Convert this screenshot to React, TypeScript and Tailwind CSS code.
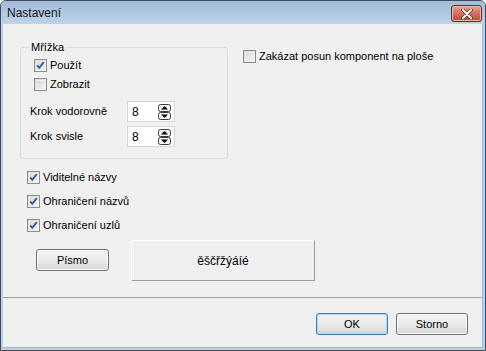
import type { ReactNode } from "react";

function CheckBox({ checked, label }: { checked: boolean; label: string }) {
  return (
    <div className="flex items-center h-[13px] gap-[3px]">
      <span className="relative w-[13px] h-[13px] shrink-0 border border-[#8e8f8f] bg-gradient-to-br from-[#d4d4d4] to-[#f7f7f7]">
        <span className="absolute inset-[1px] border border-[#f4f4f4]/60" />
        {checked && (
          <svg className="absolute inset-0" width="11" height="11" viewBox="0 0 11 11">
            <path d="M2.2 5.4 L4.3 7.8 L8.8 2.2" fill="none" stroke="#3e5ca6" strokeWidth="2" />
          </svg>
        )}
      </span>
      <span className="text-[11px] leading-[13px] text-black whitespace-nowrap">{label}</span>
    </div>
  );
}

function SpinIcon() {
  return (
    <svg width="13" height="16" viewBox="0 0 13 16">
      <rect x="0.5" y="0.5" width="12" height="7" rx="2" fill="#f2f2f2" stroke="#3c3c3c" />
      <path d="M3 5.5 L6.5 2 L10 5.5 Z" fill="#000" />
      <rect x="0.5" y="8.5" width="12" height="7" rx="2" fill="#f2f2f2" stroke="#3c3c3c" />
      <path d="M3 10.5 L6.5 14 L10 10.5 Z" fill="#000" />
    </svg>
  );
}

function SpinField({ label, value }: { label: string; value: string }) {
  return (
    <div className="flex items-center h-[21px]">
      <span className="w-[97px] text-[11px] leading-[13px] text-black">{label}</span>
      <div className="w-[48px] h-[21px] flex items-center justify-between bg-white border border-[#d5d5d5] pl-[4px] pr-[3px]">
        <span className="text-[12px] leading-[14px] text-black">{value}</span>
        <SpinIcon />
      </div>
    </div>
  );
}

function WinButton({ children, focused, className }: { children: ReactNode; focused?: boolean; className?: string }) {
  return (
    <button
      className={`h-[22px] rounded-[3px] border text-[11px] leading-[13px] text-black bg-gradient-to-b from-[#f2f2f2] via-[#ebebeb] to-[#d6d6d6] ${
        focused ? "border-[#3c7fb1] shadow-[inset_0_0_0_1px_#a7d8f5]" : "border-[#707070] shadow-[inset_0_0_0_1px_#fcfcfc]"
      } ${className ?? ""}`}
    >
      {children}
    </button>
  );
}

export default function App() {
  return (
    <div className="w-[486px] h-[351px] flex flex-col bg-[#b9d1ea] border border-[#404a58] rounded-t-[6px] overflow-hidden" style={{ fontFamily: '"Liberation Sans", Arial, sans-serif' }}>
      {/* Title bar */}
      <div className="h-[23px] shrink-0 flex items-center justify-between pl-[6px] pr-[3px] bg-gradient-to-b from-[#a1bbd9] to-[#bdd3ea]">
        <span className="text-[12px] leading-[14px] text-[#151515]">Nastavení</span>
        <div className="w-[31px] h-[17px] mt-[2px] flex items-center justify-center rounded-[3px] border border-[#5e2a2a] bg-gradient-to-b from-[#e8a395] via-[#d4705c] to-[#c3432b] shadow-[inset_0_0_0_1px_#efb8ad]">
          <svg width="12" height="10" viewBox="0 0 12 10">
            <path d="M2 1 L10 9 M10 1 L2 9" stroke="#5a2222" strokeWidth="3.4" strokeLinecap="round" />
            <path d="M2 1 L10 9 M10 1 L2 9" stroke="#ffffff" strokeWidth="2" strokeLinecap="round" />
          </svg>
        </div>
      </div>

      {/* Client area */}
      <div className="flex-1 mx-[2px] mb-[2px] bg-[#f0f0f0] flex flex-col border-r border-b border-[#7fc1ee]">
        <div className="flex flex-col px-[17px] pt-[23px]">
          <div className="flex items-start">
            {/* Grid group */}
            <div className="relative w-[208px] h-[112px] shrink-0 border border-[#d5dfe5] rounded-[3px] pl-[13px] pt-[11px]">
              <span className="absolute -top-[7px] left-[9px] bg-[#f0f0f0] px-[1px] text-[11px] leading-[13px] text-black">Mřížka</span>
              <div className="flex flex-col gap-[6px]">
                <CheckBox checked label="Použít" />
                <CheckBox checked={false} label="Zobrazit" />
              </div>
              <div className="flex flex-col gap-[4px] mt-[10px] -ml-[4px]">
                <SpinField label="Krok vodorovně" value="8" />
                <SpinField label="Krok svisle" value="8" />
              </div>
            </div>
            <div className="ml-[15px] mt-[3px]">
              <CheckBox checked={false} label="Zakázat posun komponent na ploše" />
            </div>
          </div>

          <div className="flex flex-col gap-[11px] mt-[12px] ml-[7px]">
            <CheckBox checked label="Viditelné názvy" />
            <CheckBox checked label="Ohraničení názvů" />
            <CheckBox checked label="Ohraničení uzlů" />
          </div>

          <div className="flex items-start mt-[8px]">
            <WinButton className="w-[73px] mt-[9px] ml-[16px]">Písmo</WinButton>
            <div className="ml-[22px] w-[184px] h-[41px] flex items-center justify-center border-t border-l border-white border-r border-b border-r-[#a0a0a0] border-b-[#a0a0a0]">
              <span className="text-[12px] leading-[14px] text-black">ěščřžýáíé</span>
            </div>
          </div>
        </div>

        <div className="mt-[16px] h-[1px] bg-[#a0a0a0]" />

        <div className="flex justify-end gap-[8px] pr-[14px] pt-[15px]">
          <WinButton focused className="w-[72px]">OK</WinButton>
          <WinButton className="w-[72px]">Storno</WinButton>
        </div>
      </div>
    </div>
  );
}
